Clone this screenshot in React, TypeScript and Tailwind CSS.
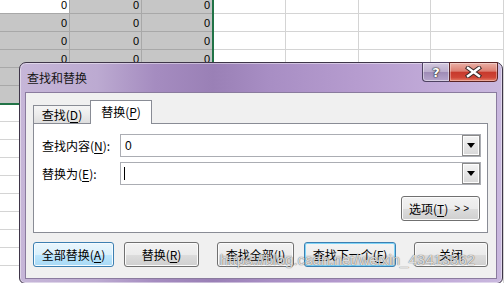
import React from "react";

const WIDTHS = ["w-[70px]", "w-[72px]", "w-[71px]", "w-[73px]", "w-[73px]", "w-[72px]", "flex-1"];

function U({ children }: { children: React.ReactNode }) {
  return <span className="underline underline-offset-[2px] decoration-[1px]">{children}</span>;
}

const btnNormal =
  "flex items-center justify-center h-[25px] rounded-[3px] border border-[#707070] bg-[linear-gradient(180deg,#f2f2f2_0%,#ebebeb_50%,#dddddd_50%,#cfcfcf_100%)] shadow-[inset_0_0_0_1px_#fbfbfb] text-[12px] leading-none text-black";

function DropBtn() {
  return (
    <div className="ml-auto flex h-[21px] w-[18px] shrink-0 items-center justify-center border border-[#8a8a8a] bg-[linear-gradient(180deg,#f4f4f4_0%,#e6e6e6_50%,#d8d8d8_100%)] shadow-[inset_0_0_0_1px_#fdfdfd]">
      <svg width="8" height="5" viewBox="0 0 8 5">
        <path d="M0 0 H8 L4 5 Z" fill="#000" />
      </svg>
    </div>
  );
}

export default function App() {
  const rows = Array.from({ length: 17 }, (_, i) => i);
  return (
    <div className="relative h-[283px] w-[504px] overflow-hidden bg-white font-['Liberation_Sans',sans-serif]">
      {/* spreadsheet grid */}
      <div className="-mt-[4px] flex flex-col">
        {rows.map((r) => (
          <div key={r} className="flex h-[18px]">
            {WIDTHS.map((w, c) => {
              const sel = r <= 5 && c <= 2;
              const active = r === 0 && c === 0;
              const showZero = r <= 3 && c <= 2;
              const cls = sel
                ? active
                  ? "bg-white border-[#a8a8a8]"
                  : "bg-[#c6c6c6] border-[#a8a8a8]"
                : "bg-white border-[#d4d4d4]";
              return (
                <div
                  key={c}
                  className={`${w} ${cls} flex h-[18px] shrink-0 justify-end border-r border-b pr-[2px] pt-[2px] text-[11px] leading-[15px] text-black`}
                >
                  {showZero ? "0" : ""}
                </div>
              );
            })}
          </div>
        ))}
      </div>
      {/* selection outline */}
      <div className="absolute left-[-3px] top-[-3px] h-[108px] w-[217px] border-2 border-[#217346]" />

      {/* dialog window */}
      <div className="absolute left-[19px] top-[62px] flex h-[222px] w-[484px] flex-col rounded-t-[7px] rounded-b-[6px] border border-[#3e3548] bg-[linear-gradient(90deg,#c6b6d8_0%,#bcaad1_16%,#a58cc0_28%,#9a80b6_40%,#a88ec4_52%,#b69ccf_70%,#c2acd9_88%,#c9b8de_100%)] px-[5px] pb-[4px] font-['Noto_Sans_CJK_SC',sans-serif] text-[12px] text-black shadow-[inset_0_0_0_1px_rgba(255,255,255,0.45)]">
        {/* title bar */}
        <div className="flex h-[29px] shrink-0">
          <div className="flex items-center pl-[2px] text-[12px] leading-none text-[#151515]">查找和替换</div>
          <div className="-mr-px -mt-px ml-auto flex h-[20px] self-start">
            <div className="flex w-[27px] items-center justify-center rounded-bl-[4px] border border-r-0 border-[#4e4262] bg-[linear-gradient(180deg,#d3c8df_0%,#bcaecd_48%,#9f8cb6_52%,#b6a5cb_100%)] shadow-[inset_0_0_0_1px_rgba(255,255,255,0.45)]">
              <span className="font-['DejaVu_Sans',sans-serif] text-[13px] font-bold leading-none text-white [text-shadow:0_0_1px_#222,0_0_1px_#222,0_0_2px_#333]">?</span>
            </div>
            <div className="flex w-[49px] items-center justify-center rounded-br-[4px] border border-[#5a2323] bg-[linear-gradient(180deg,#eab0a6_0%,#dc7f72_45%,#c7392c_52%,#cf4536_80%,#e5806a_100%)] shadow-[inset_0_0_0_1px_rgba(255,255,255,0.35)]">
              <svg width="17" height="12" viewBox="0 0 17 12">
                <path d="M3 2 L14 10 M14 2 L3 10" stroke="#3a2a2a" strokeWidth="4.4" strokeLinecap="square" />
                <path d="M3 2 L14 10 M14 2 L3 10" stroke="#ffffff" strokeWidth="2.4" strokeLinecap="square" />
              </svg>
            </div>
          </div>
        </div>

        {/* client area */}
        <div className="flex flex-1 flex-col border border-[#8a7b9e] bg-[#f0f0f0]">
          <div className="pl-[7px] pr-[8px] pt-[7px]">
            {/* tabs */}
            <div className="flex h-[23px] items-end">
              <div className="flex h-[18px] w-[58px] items-center justify-center border border-b-0 border-[#898c95] bg-[linear-gradient(180deg,#f5f5f5_0%,#ececec_50%,#dedede_100%)] text-[12px] leading-none">
                查找(<U>D</U>)
              </div>
              <div className="relative z-10 -mb-px -ml-px flex h-[24px] w-[62px] items-start justify-center border border-b-0 border-[#898c95] bg-white pt-[5px] text-[12px] leading-none">
                替换(<U>P</U>)
              </div>
            </div>
            {/* panel */}
            <div className="flex h-[110px] flex-col border border-[#898c95] bg-white pl-[8px] pr-[6px] pt-[10px]">
              <div className="flex h-[23px] items-center">
                <div className="w-[78px] shrink-0 leading-none">
                  查找内容(<U>N</U>):
                </div>
                <div className="flex h-[23px] flex-1 items-center border border-[#abadb3] bg-white">
                  <span className="pl-[4px] font-['Liberation_Sans',sans-serif] text-[12px] leading-none">0</span>
                  <DropBtn />
                </div>
              </div>
              <div className="mt-[5px] flex h-[23px] items-center">
                <div className="w-[78px] shrink-0 leading-none">
                  替换为(<U>E</U>):
                </div>
                <div className="flex h-[23px] flex-1 items-center border border-[#abadb3] bg-white">
                  <span className="ml-[3px] h-[13px] w-px bg-black" />
                  <DropBtn />
                </div>
              </div>
              <div className="mt-[11px] flex justify-end pr-px">
                <div className={`${btnNormal} w-[79px] gap-[6px]`}>
                  <span>
                    选项(<U>T</U>)
                  </span>
                  <span className="font-['Liberation_Sans',sans-serif] text-[10px] tracking-[3px]">&gt;&gt;</span>
                </div>
              </div>
            </div>
          </div>

          {/* bottom buttons */}
          <div className="mt-[9px] flex pl-[7px]">
            <div className="flex h-[25px] w-[81px] items-center justify-center rounded-[3px] border border-[#3c7fb1] bg-[linear-gradient(180deg,#eaf6fd_0%,#d9f0fc_50%,#bee6fd_50%,#a7d9f5_100%)] shadow-[inset_0_0_0_1px_#f4fbff] text-[12px] leading-none">
              全部替换(<U>A</U>)
            </div>
            <div className={`${btnNormal} ml-[10px] w-[75px]`}>
              替换(<U>R</U>)
            </div>
            <div className={`${btnNormal} ml-[18px] w-[77px]`}>
              查找全部(<U>I</U>)
            </div>
            <div className="ml-[10px] flex h-[25px] w-[92px] items-center justify-center rounded-[3px] border border-[#3c7fb1] bg-[linear-gradient(180deg,#f4f4f4_0%,#ededed_50%,#e0e0e0_50%,#d3d3d3_100%)] shadow-[inset_0_0_0_1px_#7fd4f7] text-[12px] leading-none">
              查找下一个(<U>F</U>)
            </div>
            <div className={`${btnNormal} ml-[18px] w-[74px]`}>关闭</div>
          </div>
        </div>
      </div>

      {/* watermark */}
      <div className="pointer-events-none absolute left-[220px] top-[252px] font-['Liberation_Sans',sans-serif] text-[15px] leading-none text-white/80 [text-shadow:0_0_1px_rgba(0,0,0,0.55),0_0_1px_rgba(0,0,0,0.35)]">
        https://blog.csdn.net/weixin_43413562
      </div>
    </div>
  );
}
